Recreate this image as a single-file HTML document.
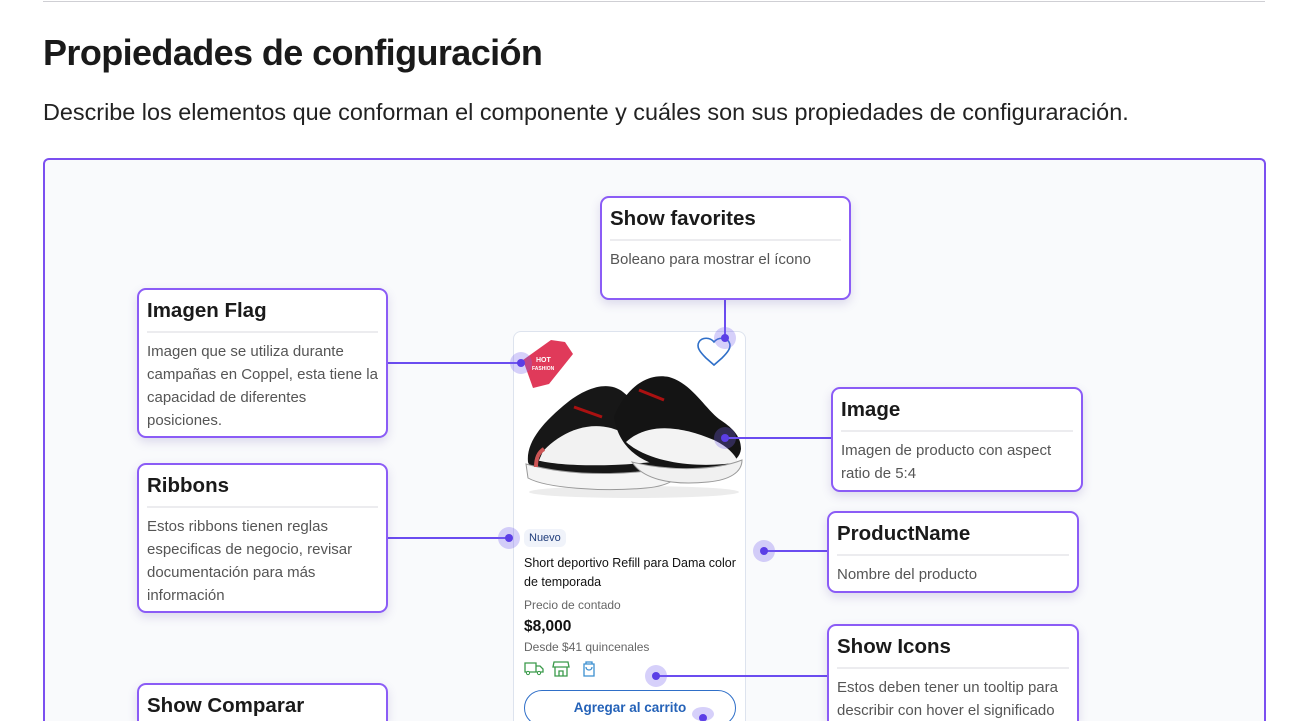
<!DOCTYPE html>
<html><head><meta charset="utf-8"><style>
*{box-sizing:border-box;margin:0;padding:0}
html,body{width:1307px;height:721px;overflow:hidden}
body{background:#fff;font-family:"Liberation Sans",sans-serif;color:#1a1a1a;position:relative}
.hr{position:absolute;left:43px;top:1px;width:1222px;height:1px;background:#cfcfd4}
h1{position:absolute;left:43px;top:32px;font-size:36px;font-weight:700;letter-spacing:-0.6px}
p.d{position:absolute;left:43px;top:99px;font-size:23.4px;color:#222}
.c{position:absolute;left:43px;top:158px;width:1223px;height:563px;border:2px solid #7b4ff0;border-bottom:none;border-radius:6px 6px 0 0;background:#f9fafc}
.b{position:absolute;background:#fff;border:2px solid #8b5cf6;border-radius:9px;box-shadow:0 4px 10px rgba(90,70,160,.18);padding:0 8px;overflow:hidden}
.b h3{font-size:20.5px;font-weight:700;padding:9px 0 8px;border-bottom:2px solid #ececef}
.b div{font-size:15px;color:#555;line-height:23px;padding-top:7px}
.l{position:absolute;background:#6b4cf0}
.dot{position:absolute;width:22px;height:22px;border-radius:50%;background:rgba(120,100,240,.3);overflow:hidden}
.dot:after{content:"";position:absolute;left:7px;top:7px;width:8px;height:8px;border-radius:50%;background:#5b3ee6}
.card{position:absolute;left:513px;top:331px;width:233px;height:390px;background:#fff;border:1px solid #dde3ee;border-bottom:none;border-radius:8px 8px 0 0;overflow:hidden}
.card *{position:absolute}
</style></head><body>
<div class="hr"></div>
<h1>Propiedades de configuración</h1>
<p class="d">Describe los elementos que conforman el componente y cuáles son sus propiedades de configuraración.</p>
<div class="c"></div>

<div class="card">
<svg style="left:0;top:0" width="233" height="190" viewBox="0 0 233 190">
<path d="M200 10c4-5 12-5 15 0 3 5-1 10-7 16l-8 7-8-7c-6-6-10-11-7-16 3-5 11-5 15 0z" fill="none" stroke="#2f6fc8" stroke-width="1.6"/>
<ellipse cx="120" cy="160" rx="105" ry="6" fill="#ececec"/>
<path d="M14 130c-2-20 15-40 40-60 18-14 40-22 55-10 12 10 25 22 45 30 10 5 14 18 12 30-4 18-40 24-80 24-40 0-70-4-72-14z" fill="#171717"/>
<path d="M22 128c15-22 45-40 75-32 20 6 40 18 55 32-35 6-100 8-130 0z" fill="#f2f2f2"/>
<path d="M12 132c50 14 120 12 160-2-2 14-15 24-40 26-45 4-100 0-118-10z" fill="#f4f4f4" stroke="#999"/>
<path d="M100 85c10-25 30-45 55-40 22 6 35 30 50 42 12 8 22 16 22 30-2 18-30 22-60 20-35-2-62-18-67-52z" fill="#141414"/>
<path d="M112 110c22-20 55-16 88-2 10 5 20 12 24 22-30 6-85 4-112-20z" fill="#f3f3f3"/>
<path d="M118 130c40 10 85 8 110-2 0 12-12 20-34 22-40 4-66-4-76-20z" fill="#f0f0f0" stroke="#999"/>
<path d="M22 135c0-10 3-15 8-18" stroke="#c55" stroke-width="4"/>
<path d="M60 75l28 10M125 58l25 10" stroke="#a11" stroke-width="3"/>
<path d="M9 28l28-20 14 2 8 12-24 30-16 4z" fill="#e03a5a"/>
<text x="22" y="30" font-size="7" fill="#fff" font-weight="700" font-family="Liberation Sans">HOT</text>
<text x="18" y="38" font-size="5" fill="#fff" font-weight="700" font-family="Liberation Sans">FASHION</text>
</svg>
<span style="left:10px;top:197px;background:#f0f3fa;border-radius:6px;font-size:11px;color:#1f3c7a;padding:3px 5px">Nuevo</span>
<span style="left:10px;top:222px;width:220px;font-size:12.5px;line-height:19px;color:#111">Short deportivo Refill para Dama color de temporada</span>
<span style="left:10px;top:266px;font-size:12px;color:#666">Precio de contado</span>
<span style="left:10px;top:286px;font-size:15.5px;font-weight:700;color:#111">$8,000</span>
<span style="left:10px;top:308px;font-size:12px;color:#666">Desde $41 quincenales</span>
<svg style="left:10px;top:327px" width="80" height="20" viewBox="0 0 80 20">
<path d="M1 4h11v9H1zM12 7h4l3 3v3h-7" fill="none" stroke="#3a9a4a" stroke-width="1.3"/><circle cx="4" cy="14" r="1.6" fill="#fff" stroke="#3a9a4a"/><circle cx="15" cy="14" r="1.6" fill="#fff" stroke="#3a9a4a"/>
<path d="M30 3h14l1 5H29zM31 8v9h12V8M35 17v-5h4v5" fill="none" stroke="#3a9a4a" stroke-width="1.3"/>
<path d="M60 5h10v12H60zM62 5V3h6v2M62 8c0 4 6 4 6 0" fill="none" stroke="#3b8fd0" stroke-width="1.3"/>
</svg>
<span style="left:10px;top:358px;width:212px;height:36px;border:1.5px solid #2f6fc8;border-radius:18px;color:#2462b8;font-size:13.5px;font-weight:700;text-align:center;line-height:33px">Agregar al carrito</span>
</div>

<div class="l" style="left:724px;top:299px;width:2px;height:40px"></div>
<div class="l" style="left:387px;top:362px;width:134px;height:2px"></div>
<div class="l" style="left:726px;top:437px;width:106px;height:2px"></div>
<div class="l" style="left:387px;top:537px;width:122px;height:2px"></div>
<div class="l" style="left:764px;top:550px;width:64px;height:2px"></div>
<div class="l" style="left:656px;top:675px;width:172px;height:2px"></div>
<div class="dot" style="left:714px;top:327px"></div>
<div class="dot" style="left:510px;top:352px"></div>
<div class="dot" style="left:714px;top:427px"></div>
<div class="dot" style="left:498px;top:527px"></div>
<div class="dot" style="left:753px;top:540px"></div>
<div class="dot" style="left:645px;top:665px"></div>
<div class="dot" style="left:692px;top:707px;height:14px"></div>

<div class="b" style="left:600px;top:196px;width:251px;height:104px"><h3>Show favorites</h3><div>Boleano para mostrar el ícono</div></div>
<div class="b" style="left:137px;top:288px;width:251px;height:150px"><h3>Imagen Flag</h3><div>Imagen que se utiliza durante campañas en Coppel, esta tiene la capacidad de diferentes posiciones.</div></div>
<div class="b" style="left:831px;top:387px;width:252px;height:105px"><h3>Image</h3><div>Imagen de producto con aspect ratio de 5:4</div></div>
<div class="b" style="left:137px;top:463px;width:251px;height:150px"><h3>Ribbons</h3><div>Estos ribbons tienen reglas especificas de negocio, revisar documentación para más información</div></div>
<div class="b" style="left:827px;top:511px;width:252px;height:82px"><h3>ProductName</h3><div>Nombre del producto</div></div>
<div class="b" style="left:827px;top:624px;width:252px;height:97px;border-bottom:none;border-radius:9px 9px 0 0"><h3>Show Icons</h3><div>Estos deben tener un tooltip para describir con hover el significado</div></div>
<div class="b" style="left:137px;top:683px;width:251px;height:38px;border-bottom:none;border-radius:9px 9px 0 0"><h3>Show Comparar</h3></div>
</body></html>
